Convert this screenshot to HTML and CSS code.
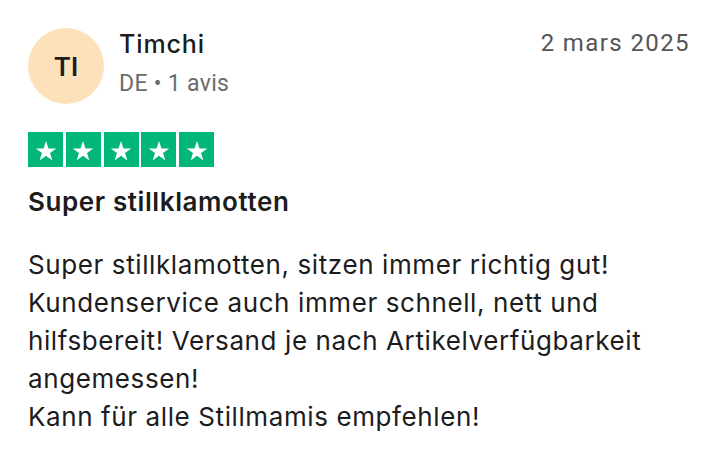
FILE: index.html
```html
<!DOCTYPE html>
<html lang="de">
<head>
<meta charset="utf-8">
<link rel="stylesheet" href="styles.css">
</head>
<body>
<article class="review">
  <header class="head">
    <div class="avatar">TI</div>
    <div class="who">
      <div class="name">Timchi</div>
      <div class="meta">DE • 1 avis</div>
    </div>
    <time class="date">2 mars 2025</time>
  </header>
  <div class="stars">
    <span class="star"><svg viewBox="0 0 24 24"><path d="M12 3.6l2.3 6.9h7.2l-5.8 4.2 2.2 6.9L12 17.4l-5.9 4.2 2.2-6.9-5.8-4.2h7.2z" fill="#fff"/></svg></span>
    <span class="star"><svg viewBox="0 0 24 24"><path d="M12 3.6l2.3 6.9h7.2l-5.8 4.2 2.2 6.9L12 17.4l-5.9 4.2 2.2-6.9-5.8-4.2h7.2z" fill="#fff"/></svg></span>
    <span class="star"><svg viewBox="0 0 24 24"><path d="M12 3.6l2.3 6.9h7.2l-5.8 4.2 2.2 6.9L12 17.4l-5.9 4.2 2.2-6.9-5.8-4.2h7.2z" fill="#fff"/></svg></span>
    <span class="star"><svg viewBox="0 0 24 24"><path d="M12 3.6l2.3 6.9h7.2l-5.8 4.2 2.2 6.9L12 17.4l-5.9 4.2 2.2-6.9-5.8-4.2h7.2z" fill="#fff"/></svg></span>
    <span class="star"><svg viewBox="0 0 24 24"><path d="M12 3.6l2.3 6.9h7.2l-5.8 4.2 2.2 6.9L12 17.4l-5.9 4.2 2.2-6.9-5.8-4.2h7.2z" fill="#fff"/></svg></span>
  </div>
  <h2 class="title">Super stillklamotten</h2>
  <p class="body">Super stillklamotten, sitzen immer richtig gut!<br>Kundenservice auch immer schnell, nett und hilfsbereit! Versand je nach Artikelverfügbarkeit angemessen!<br>Kann für alle Stillmamis empfehlen!</p>
</article>
</body>
</html>
```
FILE: styles.css
```css
html, body {
  margin: 0;
  background: #fff;
}
body {
  font-family: Inter, "Liberation Sans", sans-serif;
  color: #1c1c1c;
}
.review {
  padding: 28px 30px 0 28px;
}
.head {
  display: flex;
  align-items: flex-start;
}
.avatar {
  width: 76px;
  height: 76px;
  border-radius: 50%;
  background: #fde1bb;
  display: flex;
  align-items: center;
  justify-content: center;
  font-size: 26px;
  font-weight: 600;
  flex: none;
}
.who {
  margin-left: 15px;
  flex: 1;
}
.name {
  font-size: 25px;
  font-weight: 500;
  line-height: 32px;
  letter-spacing: 0.9px;
}
.meta {
  font-family: Roboto, "Liberation Sans", sans-serif;
  font-size: 23px;
  color: #6b6b6b;
  line-height: 30px;
  margin-top: 9px;
  letter-spacing: 0.3px;
}
.date {
  font-family: Roboto, "Liberation Sans", sans-serif;
  font-size: 24px;
  color: #555;
  line-height: 30px;
  letter-spacing: 1.4px;
}
.stars {
  display: flex;
  gap: 2.75px;
  margin-top: 28px;
}
.star {
  width: 35px;
  height: 35px;
  background: #00b67a;
  display: flex;
  align-items: center;
  justify-content: center;
}
.star svg {
  width: 26px;
  height: 26px;
}
.title {
  font-size: 26px;
  font-weight: 600;
  margin: 20px 0 0;
  line-height: 30px;
  letter-spacing: 0.6px;
}
.body {
  font-size: 26px;
  line-height: 38px;
  letter-spacing: 0.6px;
  margin: 29px 0 0;
  max-width: 640px;
}
```
